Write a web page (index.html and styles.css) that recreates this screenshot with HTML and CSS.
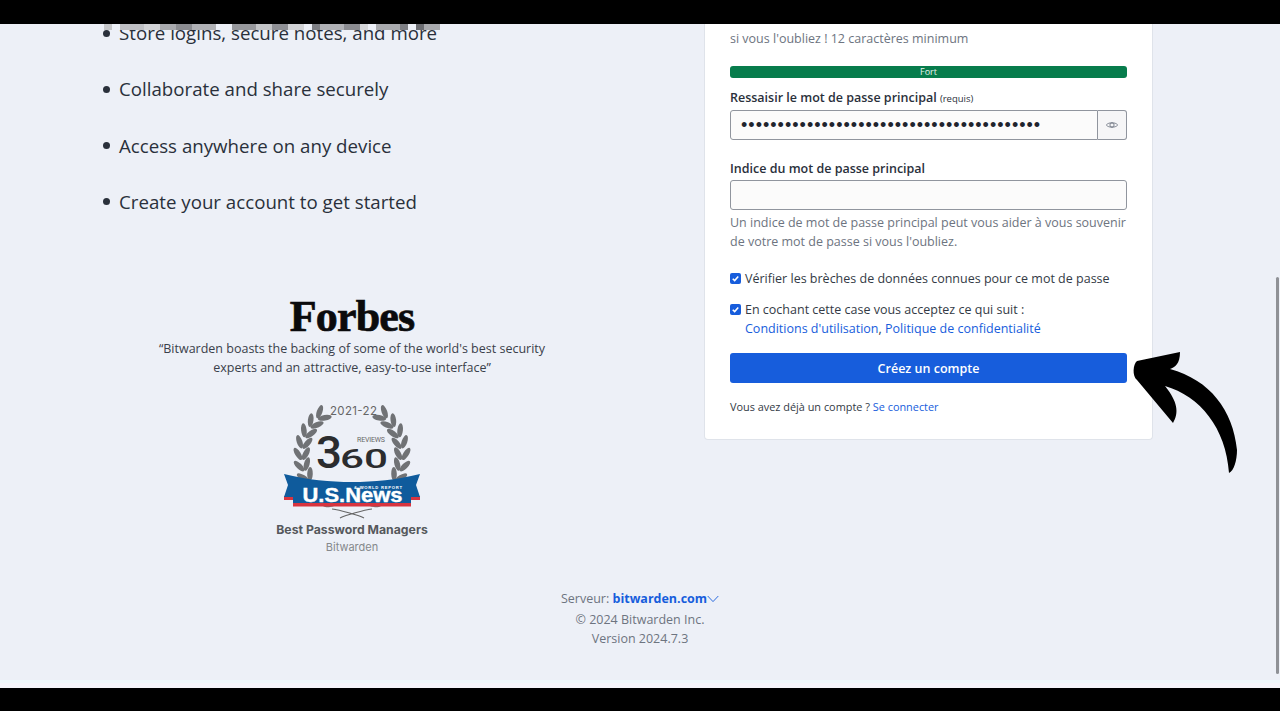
FILE: index.html
```html
<!DOCTYPE html>
<html>
<head>
<link rel="stylesheet" href="styles.css">
</head>
<body>
<div class="frame">
  <div class="bar"></div>

  <div class="page">
    <div class="columns">
      <div class="left">
        <ul class="points">
          <li>Store logins, secure notes, and more</li>
          <li>Collaborate and share securely</li>
          <li>Access anywhere on any device</li>
          <li>Create your account to get started</li>
        </ul>

        <div class="forbes">Forbes</div>
        <p class="quote">“Bitwarden boasts the backing of some of the world's best security<br>experts and an attractive, easy-to-use interface”</p>

        <svg class="badge" viewBox="0 0 150 120" width="150" height="120">
          <defs>
            <g id="leaves">
              <ellipse cx="75" cy="1" rx="2.8" ry="7" transform="rotate(60 75 1)"/>
              <ellipse cx="75" cy="9" rx="2.8" ry="7" transform="rotate(-60 75 9)"/>
            </g>
            <g id="laurel">
              <use href="#leaves" transform="rotate(-40 72 55)"/>
              <use href="#leaves" transform="rotate(-53 72 55)"/>
              <use href="#leaves" transform="rotate(-66 72 55)"/>
              <use href="#leaves" transform="rotate(-79 72 55)"/>
              <use href="#leaves" transform="rotate(-92 72 55)"/>
              <use href="#leaves" transform="rotate(-105 72 55)"/>
              <use href="#leaves" transform="rotate(-118 72 55)"/>
              <use href="#leaves" transform="rotate(-146 72 55)"/>
              <use href="#leaves" transform="rotate(-159 72 55)"/>
            </g>
          </defs>
          <g fill="#707275">
            <use href="#laurel"/>
            <use href="#laurel" transform="matrix(-1 0 0 1 144 0)"/>
          </g>
          <path d="M52 109 C60 110 78 115 84 118 M92 109 C84 110 66 115 60 118" fill="none" stroke="#666" stroke-width="1.2"/>
          <text x="73.5" y="15" class="b-year" textLength="47">2021-22</text>
          <text x="91" y="41.5" class="b-reviews" textLength="28">REVIEWS</text>
          <text x="49" y="68" class="b-three" textLength="26" lengthAdjust="spacingAndGlyphs">3</text>
          <text x="84" y="68" class="b-sixty" textLength="48" lengthAdjust="spacingAndGlyphs">60</text>
          <path d="M4 96 H14 V100 H4 Z M130 96 H140 V100 H130 Z" fill="#d8343f"/>
          <path d="M13 103 H131 V106.5 H13 Z" fill="#d8343f"/>
          <path d="M4 74 C28 80 50 82 72 82 C94 82 116 80 140 74 L136 85 L140 97 H131 V103 H13 V97 H4 L8 85 Z" fill="#0f5b9c"/>
          <text x="72.5" y="101.5" class="b-news" textLength="100" lengthAdjust="spacingAndGlyphs">U.S.News</text>
          <text x="98" y="88.5" class="b-world" textLength="48">&amp; WORLD REPORT</text>
        </svg>
        <div class="badge-title">Best Password Managers</div>
        <div class="badge-name">Bitwarden</div>
      </div>

      <div class="card">
        <p class="hint hint-top">si vous l'oubliez ! 12 caractères minimum</p>
        <div class="meter">Fort</div>

        <label class="field-label">Ressaisir le mot de passe principal <small>(requis)</small></label>
        <div class="input-group">
          <div class="input dots">•••••••••••••••••••••••••••••••••••••••••</div>
          <div class="eye">
            <svg viewBox="0 0 16 16" width="14" height="14" fill="none" stroke="#6d7480" stroke-width="1">
              <path d="M1.5 8 C4 4.6 12 4.6 14.5 8 C12 11.4 4 11.4 1.5 8 Z"/>
              <circle cx="8" cy="8" r="2.4"/>
            </svg>
          </div>
        </div>

        <label class="field-label label-hint">Indice du mot de passe principal</label>
        <div class="input input-alone"></div>
        <p class="hint hint-help">Un indice de mot de passe principal peut vous aider à vous souvenir<br>de votre mot de passe si vous l'oubliez.</p>

        <div class="check check-first">
          <span class="box"><svg viewBox="0 0 12 12" width="11" height="11" fill="none" stroke="#fff" stroke-width="1.7"><path d="M3 6.2 L5.1 8.3 L9 3.9"/></svg></span>
          <span>Vérifier les brèches de données connues pour ce mot de passe</span>
        </div>
        <div class="check check-second">
          <span class="box"><svg viewBox="0 0 12 12" width="11" height="11" fill="none" stroke="#fff" stroke-width="1.7"><path d="M3 6.2 L5.1 8.3 L9 3.9"/></svg></span>
          <span>En cochant cette case vous acceptez ce qui suit :<br><a href="#">Conditions d'utilisation</a>, <a href="#">Politique de confidentialité</a></span>
        </div>

        <button class="submit">Créez un compte</button>
        <p class="login">Vous avez déjà un compte ? <a href="#">Se connecter</a></p>
      </div>
    </div>

    <div class="footer">
      <div class="server">Serveur: <b>bitwarden.com</b><svg viewBox="0 0 12 8" width="12" height="8" fill="none" stroke="#175ddc" stroke-width="0.9"><path d="M0.7 1 L6 6.6 L11.3 1"/></svg></div>
      <div>© 2024 Bitwarden Inc.</div>
      <div>Version 2024.7.3</div>
    </div>
  </div>

  <div class="strip"></div>
  <div class="bar bar-bottom"></div>

  <div class="mosaic"></div>
  <div class="scroll-thumb"></div>
  <svg class="arrow" viewBox="0 0 130 145" width="130" height="145">
    <path d="M60 12 L17 21 C13 24 12 36 17 40 L53 83 C59 73 58 62 45 46 C80 56 106 88 109 133 C114 131 117 120 117 110 C113 70 90 40 50 29 C55 27 60 24 60 12 Z" fill="#000"/>
  </svg>
</div>
</body>
</html>
```

FILE: styles.css
```css
* {
  box-sizing: border-box;
}

html, body {
  margin: 0;
  padding: 0;
}

body {
  font-family: "Open Sans", "Liberation Sans", sans-serif;
  color: #1f242e;
}

a {
  color: #175ddc;
  text-decoration: none;
}

p {
  margin: 0;
}

.frame {
  position: relative;
  display: flex;
  flex-direction: column;
  width: 1280px;
  height: 711px;
  overflow: hidden;
  background-color: #edf0f7;
}

.bar {
  flex: 0 0 24px;
  background-color: #000;
}

.bar-bottom {
  flex: 0 0 23px;
}

.strip {
  flex: 0 0 8px;
  background: linear-gradient(#eff8fb 0, #eff8fb 3px, #f6f6fb 3px);
}

.page {
  flex: 1;
  min-height: 0;
  overflow: hidden;
}

.columns {
  display: flex;
  align-items: flex-start;
}

/* left column */
.left {
  flex: 0 0 704px;
  display: flex;
  flex-direction: column;
  align-items: center;
}

.points {
  align-self: stretch;
  display: flex;
  flex-direction: column;
  gap: 28.3px;
  list-style: none;
  margin: -5px 0 0;
  padding: 0 0 0 103px;
  font-size: 18.7px;
  line-height: 28px;
  color: #2a303b;
}

.points li {
  display: flex;
  align-items: center;
  gap: 9px;
}

.points li::before {
  content: "";
  flex: 0 0 7px;
  height: 7px;
  border-radius: 50%;
  background-color: #2a303b;
}

.forbes {
  margin-top: 80px;
  height: 42px;
  font-family: "Liberation Serif", serif;
  font-weight: 700;
  font-size: 44px;
  line-height: 42px;
  letter-spacing: -0.8px;
  color: #0b0b0d;
  -webkit-text-stroke: 0.7px #0b0b0d;
}

.quote {
  margin-top: 1px;
  font-size: 12.5px;
  line-height: 19px;
  text-align: center;
  color: #3a404a;
}

.badge {
  display: block;
  margin: 23px 0 0 6px;
}

.b-year {
  font-family: "Inter", sans-serif;
  font-size: 11.5px;
  text-anchor: middle;
  fill: #666;
}

.b-reviews {
  font-family: "Roboto", sans-serif;
  font-size: 7px;
  text-anchor: middle;
  fill: #666;
}

.b-three {
  font-family: "Roboto", sans-serif;
  font-weight: 500;
  font-size: 45px;
  text-anchor: middle;
  fill: #2b2c2e;
}

.b-sixty {
  font-family: "Roboto", sans-serif;
  font-weight: 500;
  font-size: 26px;
  text-anchor: middle;
  fill: #2b2c2e;
}

.b-news {
  font-family: "Liberation Sans", sans-serif;
  font-weight: 700;
  font-size: 21px;
  text-anchor: middle;
  fill: #fff;
  stroke: #fff;
  stroke-width: 0.4px;
}

.b-world {
  font-family: "Liberation Sans", sans-serif;
  font-weight: 700;
  font-size: 4.2px;
  text-anchor: middle;
  fill: #fff;
}

.badge-title {
  margin-top: 1px;
  font-family: "Inter", sans-serif;
  font-weight: 700;
  font-size: 12.25px;
  line-height: 18px;
  color: #55585c;
}

.badge-name {
  font-family: "Inter", sans-serif;
  font-size: 11px;
  line-height: 16px;
  color: #85888c;
}

/* form card */
.card {
  flex: 0 0 449px;
  height: 416px;
  padding: 5px 25px 0;
  background-color: #fff;
  border: 1px solid #dfe3ea;
  border-top: 0;
  border-radius: 0 0 4px 4px;
}

.hint {
  font-size: 12.5px;
  line-height: 19px;
  color: #6d7480;
}

.meter {
  margin-top: 18px;
  height: 12px;
  border-radius: 3px;
  background-color: #077c4c;
  font-size: 9px;
  line-height: 12px;
  text-align: center;
  color: #e8f3ee;
}

.field-label {
  display: block;
  margin-top: 11px;
  font-size: 12.5px;
  font-weight: 600;
  line-height: 17px;
  color: #2a303b;
}

.field-label small {
  font-size: 9.5px;
  font-weight: 400;
}

.label-hint {
  margin-top: 20px;
}

.input-group {
  display: flex;
  margin-top: 3px;
  height: 30px;
}

.input {
  height: 30px;
  background-color: #fbfbfb;
  border: 1px solid #90959e;
  border-radius: 3px;
}

.input-alone {
  margin-top: 3px;
}

.dots {
  flex: 1;
  padding-left: 10px;
  border-radius: 3px 0 0 3px;
  font-family: "Liberation Sans", sans-serif;
  font-size: 18px;
  line-height: 28px;
  letter-spacing: 1.02px;
  color: #1f242e;
  white-space: nowrap;
  overflow: hidden;
}

.eye {
  display: flex;
  flex: 0 0 29px;
  align-items: center;
  justify-content: center;
  border: 1px solid #90959e;
  border-left: 0;
  border-radius: 0 3px 3px 0;
  background-color: #f6f6f7;
}

.hint-help {
  margin-top: 3px;
}

.check {
  display: flex;
  align-items: flex-start;
  gap: 4px;
  font-size: 12.5px;
  line-height: 19px;
  color: #333a45;
}

.check-first {
  margin-top: 18px;
}

.check-second {
  margin-top: 12px;
}

.box {
  display: flex;
  flex: 0 0 11px;
  width: 11px;
  height: 11px;
  margin-top: 4px;
  border-radius: 2px;
  background-color: #175ddc;
}

.submit {
  display: block;
  width: 100%;
  height: 30px;
  margin-top: 15px;
  padding: 0;
  border: 0;
  border-radius: 3px;
  background-color: #175ddc;
  font-family: inherit;
  font-size: 12.5px;
  font-weight: 600;
  color: #fff;
}

.login {
  margin-top: 15px;
  font-size: 10.9px;
  line-height: 17px;
  color: #333a45;
}

/* footer */
.footer {
  margin-top: 34px;
  font-size: 12.5px;
  line-height: 19px;
  text-align: center;
  color: #6d7480;
}

.server {
  margin-bottom: 2px;
}

.server b {
  color: #175ddc;
  font-weight: 700;
}

/* things lying over the page */
.mosaic {
  position: absolute;
  top: 24px;
  left: 104px;
  width: 336px;
  height: 6px;
  background: linear-gradient(90deg,
    #c6c7ca 0 8px, #edf0f7 8px 16px,
    #bfc0c4 16px 40px, #d2d3d6 40px 56px, #a9aaae 56px 72px,
    #8b8c91 72px 88px, #b0b1b5 88px 112px, #edf0f7 112px 128px,
    #97989c 128px 152px, #c3c4c7 152px 168px, #8f9095 168px 184px, #d2d3d6 184px 200px,
    #edf0f7 200px 208px, #7e7f84 208px 216px, #b0b1b5 216px 240px, #8b8c91 240px 256px, #d5d6d9 256px 264px,
    #edf0f7 264px 272px, #a9aaae 272px 296px, #7e7f84 296px 304px, #edf0f7 304px 312px,
    #6c6d72 312px 320px, #a9aaae 320px 336px);
}

.scroll-thumb {
  position: absolute;
  top: 277px;
  right: 1px;
  width: 3px;
  height: 397px;
  border-radius: 2px;
  background-color: #8f9196;
}

.arrow {
  position: absolute;
  top: 340px;
  left: 1120px;
}
```
